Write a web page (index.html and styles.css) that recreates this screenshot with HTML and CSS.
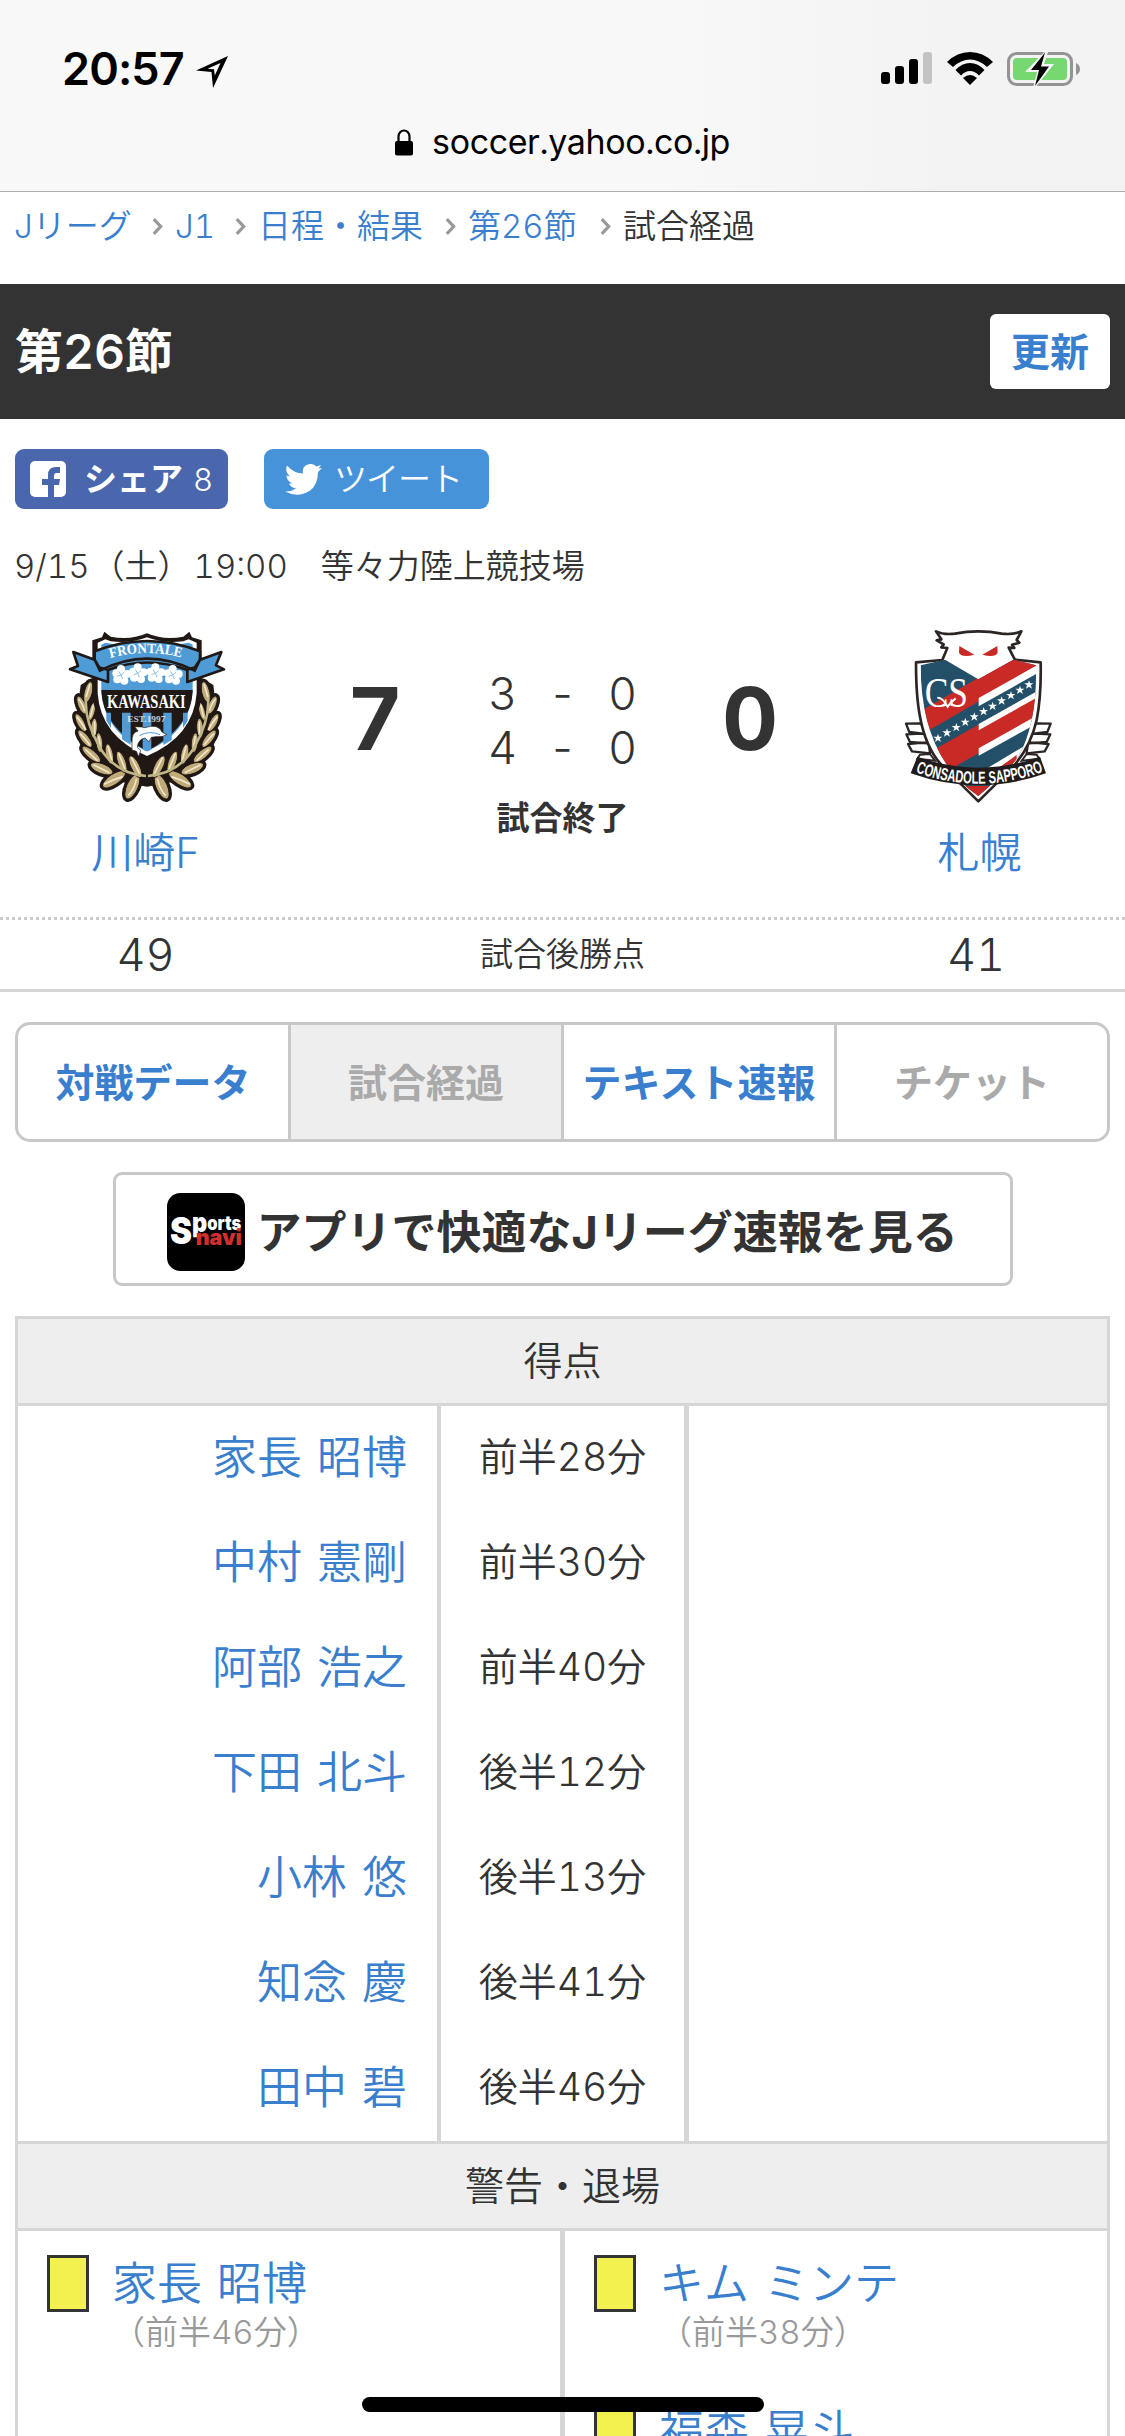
FILE: index.html
```html
<!DOCTYPE html>
<html lang="ja">
<head>
  <meta charset="UTF-8" />
  <title>第26節 川崎F vs. 札幌 試合経過</title>
  <meta name="viewport" content="width=device-width, initial-scale=1.0" />
  <link rel="stylesheet" href="styles.css">
</head>
<body>
  <div class="browser-bar">
    <div class="status">
      <div class="clock">
        <span class="time">20:57</span>
        <svg class="location" width="32" height="33" viewBox="0 0 32 33"><path fill-rule="evenodd" d="M32 0L17 32L15.500 16L0 14.500ZM24.500 7L11.500 12.700L18 13.300L18.800 19.500Z"/></svg>
      </div>
      <div class="status-icons">
        <svg width="52" height="33" viewBox="0 0 52 33">
          <rect x="0" y="20" width="9" height="12" rx="3"/>
          <rect x="14" y="14" width="9" height="18" rx="3"/>
          <rect x="28" y="7" width="9" height="25" rx="3"/>
          <rect x="42" y="0" width="9" height="32" rx="3" fill="#c3c3c3"/>
        </svg>
        <svg width="46" height="33" viewBox="0 0 46 33">
          <path d="M0 10Q10 0 23 0T46 10L40 15Q32 7.500 23 7.500T6 15Z"/>
          <path d="M8.500 18Q15 11 23 11T37.500 18L32 23.500Q28 19 23 19T14 23.500Z"/>
          <path d="M16 26Q23 20 30 26L23 33Z"/>
        </svg>
        <svg width="74" height="36" viewBox="0 0 74 36">
          <rect x="1.500" y="2.500" width="63" height="31" rx="8" fill="none" stroke="#949494" stroke-width="3"/>
          <rect x="6" y="7" width="54" height="22" rx="4" fill="#77d872"/>
          <path d="M69 12Q73 14 73 18T69 24Z" fill="#949494"/>
          <path d="M37.500 1L18 21H30L26.500 35H29.500L47 13H37L41 1Z" fill="#f4f4f4"/>
          <path d="M38 1.500L24 19H32L28 35L42 15.500H34Z"/>
        </svg>
      </div>
    </div>
    <div class="address">
      <svg width="18" height="27" viewBox="0 0 18 27"><path d="M3.500 13V7.500a5.500 6 0 0 1 11 0V13" fill="none" stroke="#000" stroke-width="2.200"/><rect y="12" width="18" height="14.500" rx="2"/></svg>
      <span>soccer.yahoo.co.jp</span>
    </div>
  </div>

  <nav class="breadcrumb">
    <a class="crumb-league">Jリーグ</a><svg class="chev" viewBox="0 0 10 16"><path d="M1.500 1L8 8L1.500 15"/></svg>
    <a class="crumb-j1">J1</a><svg class="chev" viewBox="0 0 10 16"><path d="M1.500 1L8 8L1.500 15"/></svg>
    <a class="crumb-schedule">日程・結果</a><svg class="chev" viewBox="0 0 10 16"><path d="M1.500 1L8 8L1.500 15"/></svg>
    <a class="crumb-round">第26節</a><svg class="chev" viewBox="0 0 10 16"><path d="M1.500 1L8 8L1.500 15"/></svg>
    <span>試合経過</span>
  </nav>

  <header class="round-header">
    <h1>第26節</h1>
    <button class="reload">更新</button>
  </header>

  <div class="share">
    <a class="share-btn facebook">
      <svg width="36" height="36" viewBox="0 0 36 36"><rect width="36" height="36" rx="5" fill="#fff"/><path d="M18 36V24H12V18H18V14Q18 6 26 6H30V12H26.500Q24 12 24 15V18H30L29 24H24V36Z" fill="#4a67ad"/></svg>
      <b>シェア</b><span>8</span>
    </a>
    <a class="share-btn twitter">
      <svg width="37" height="31" viewBox="0 0 37 31"><path fill="#fff" d="M2 1.500Q9 9.500 18 9.500Q17 4 20.500 1.500Q27-2 31.500 2.500L36 1L33.500 4.500L37 4L33 8Q33 21 24.500 27Q13 34 0 27.500Q6 28 11 24.500Q5.500 23.500 4 19.500H7.500Q1.500 17 1.500 11.500L5 12.500Q-.5 8 2 1.500Z"/></svg>
      <span>ツイート</span>
    </a>
  </div>

  <p class="match-date">9/15<span class="weekday">（土）</span>19:00　等々力陸上競技場</p>

  <section class="scoreboard">
    <div class="team">
      <svg class="crest crest-home" viewBox="0 0 600 630">
        <defs>
          <g id="leaves">
            <ellipse rx="12" ry="32" transform="translate(115 246) rotate(14)"/>
            <ellipse rx="11" ry="29" transform="translate(95 285) rotate(-22)"/>
            <ellipse rx="11" ry="30" transform="translate(92 338) rotate(-28)"/>
            <ellipse rx="12" ry="32" transform="translate(105 386) rotate(-38)"/>
            <ellipse rx="13" ry="35" transform="translate(124 433) rotate(-50)"/>
            <ellipse rx="15" ry="36" transform="translate(155 476) rotate(-68)"/>
            <ellipse rx="16" ry="40" transform="translate(192 508) rotate(56)"/>
            <ellipse rx="17" ry="40" transform="translate(247 530) rotate(24)"/>
            <ellipse rx="9" ry="28" transform="translate(126 304) rotate(14)"/>
            <ellipse rx="10" ry="29" transform="translate(132 354) rotate(4)"/>
            <ellipse rx="10" ry="30" transform="translate(148 398) rotate(-6)"/>
            <ellipse rx="11" ry="31" transform="translate(178 432) rotate(-12)"/>
            <ellipse rx="12" ry="34" transform="translate(215 456) rotate(-20)"/>
            <ellipse rx="13" ry="36" transform="translate(256 470) rotate(-26)"/>
          </g>
          <g id="veins">
            <path d="M120 222L108 262M85 267Q98 280 104 304M80 320Q94 336 108 360M90 370Q106 386 120 406M106 418Q126 436 142 452M130 464Q154 476 178 488M162 523Q186 510 218 500M235 557Q252 540 260 506"/>
            <path d="M130 284L121 322M134 334V374M146 378L152 416M174 408L186 454M206 430L226 480M244 442L270 494"/>
          </g>
        </defs>
        <path d="M125 205L92 225L82 310L78 370L104 440L180 510L291 530L402 510L478 440L504 370L500 310L490 225L457 205Z" fill="#201815"/>
        <g id="wreath">
          <use href="#leaves" fill="#201815" stroke="#201815" stroke-width="17"/>
          <use href="#leaves" fill="#c0ab78" stroke="#201815" stroke-width="3"/>
          <use href="#veins" fill="none" stroke="#f1e6cf" stroke-width="5"/>
          <path d="M108 262Q102 330 148 410T288 498" fill="none" stroke="#c0b684" stroke-width="8"/>
        </g>
        <use href="#wreath" transform="translate(582 0) scale(-1 1)"/>
        <path d="M163 65L182 80Q240 92 291 70Q342 92 400 80L418 65L426 82L455 91V250Q445 390 291 450Q137 390 127 250V91L156 82Z" fill="#201815"/>
        <path d="M143 98L166 88L182 94Q240 102 291 82Q342 102 400 94L416 88L440 98V250Q430 380 291 438Q152 380 143 250Z" fill="#fff"/>
        <path d="M154 104L166 98Q230 112 291 94Q352 112 416 98L428 104V250Q415 370 291 424Q167 370 154 250Z" fill="#4f9bd6"/>
        <path d="M154 240H428Q426 350 291 424Q156 350 154 240Z" fill="#201815"/>
        <path d="M169 308H183V354L169 332ZM216 308H242V404L216 388ZM278 308H304V419L291 424L278 419ZM340 308H365V390L340 405ZM399 308H413V332L399 354Z" fill="#4f9bd6"/>
        <path d="M70 126L134 149V124Q291 62 450 124V149L514 126L498 166L522 178L412 216V180Q291 135 174 180V216L60 178L84 168Z" fill="#4f9bd6" stroke="#201815" stroke-width="8" stroke-linejoin="round"/>
        <path d="M134 149L150 182Q291 110 434 182L450 149M134 149L148 173L171 178M450 149L434 173L412 178" fill="none" stroke="#201815" stroke-width="8"/>
        <path id="ribbon" d="M150 154Q291 104 432 154" fill="none"/>
        <text class="crest-serif" font-size="43"><textPath href="#ribbon" startOffset="32" textLength="216" lengthAdjust="spacingAndGlyphs">FRONTALE</textPath></text>
        <g fill="#fff">
          <g id="flower"><circle cx="213" cy="177" r="12"/><circle cx="231" cy="192" r="12"/><circle cx="223" cy="212" r="12"/><circle cx="202" cy="208" r="12"/><circle cx="199" cy="190" r="12"/><circle cx="213" cy="195" r="12"/><path d="M213 195l-7-11M213 195l10-8M213 195l5 12M213 195l-12 4" stroke="#8ec0e6" stroke-width="3"/></g>
          <use href="#flower" x="50" y="-5"/><use href="#flower" x="103" y="-5"/><use href="#flower" x="155"/>
        </g>
        <text class="crest-serif" x="171" y="293" font-size="55" textLength="236" lengthAdjust="spacingAndGlyphs">KAWASAKI</text>
        <text class="crest-serif" x="232" y="336" font-size="25" textLength="114" lengthAdjust="spacingAndGlyphs" opacity=".75">EST.1997</text>
        <path d="M246 400Q244 366 264 363L254 350Q278 350 284 353Q325 340 336 366L350 374Q340 382 318 380L304 382L297 395L285 384Q264 388 262 412L272 421L266 440L259 424L246 420Z" fill="#fff" stroke="#201815" stroke-width="2"/>
        <path d="M268 377Q298 360 330 374" fill="none" stroke="#4f9bd6" stroke-width="3"/>
      </svg>
      <a>川崎F</a>
    </div>
    <div class="total">7</div>
    <div class="halves">
      <div class="half"><span>3</span><span>-</span><span>0</span></div>
      <div class="half"><span>4</span><span>-</span><span>0</span></div>
      <div class="state">試合終了</div>
    </div>
    <div class="total">0</div>
    <div class="team">
      <svg class="crest" viewBox="0 0 600 630">
        <defs>
          <clipPath id="sshield"><path d="M122 166L195 149L295 208L400 149L468 166Q472 340 415 440Q390 476 295 558Q122 440 122 166Z"/></clipPath>
        </defs>
        <g id="feathers" fill="#fff" stroke="#2b2523" stroke-width="7" stroke-linejoin="round">
          <path d="M150 430L96 424L84 402L146 396ZM142 400L90 396L79 373L138 370ZM135 372L88 366L78 341L118 340L136 350Z"/>
        </g>
        <use href="#feathers" transform="translate(590 0) scale(-1 1)"/>
        <path d="M168 64Q190 75 225 71Q295 57 365 71Q400 75 424 64L410 90L418 98L396 104L403 114L386 113L400 140L405 149L482 157Q484 260 470 330Q450 420 385 485L295 574L205 485Q140 430 120 320Q108 260 108 157L187 150L202 114L184 112L191 103L170 91L184 88Z" fill="#fff" stroke="#2b2523" stroke-width="8" stroke-linejoin="round"/>
        <path d="M238 108L283 134Q245 144 237 128ZM352 108L307 134Q345 144 353 128Z" fill="#c92a25"/>
        <g clip-path="url(#sshield)">
          <rect x="100" y="140" width="390" height="430" fill="#235068"/>
          <path d="M100 316L430 126L490 150V162L100 388Z" fill="#c92a25"/>
          <path d="M296 264L490 155V180L296 289Z" fill="#fff"/>
          <path d="M100 454L490 235V320L100 540Z" fill="#c92a25"/>
          <path d="M296 342L490 233V252L296 361Z" fill="#fff"/>
          <path d="M296 415L490 306V330L296 437Z" fill="#fff"/>
          <path d="M296 490L490 374V400L296 512Z" fill="#fff"/>
          <path d="M340 485L410 435V570H200V528H340Z" fill="#c92a25"/>
        </g>
        <text class="crest-script" x="134" y="290" font-size="128" textLength="130" lengthAdjust="spacingAndGlyphs">CS</text>
        <path d="M172 263Q188 262 203 290Q212 276 227 265" fill="none" stroke="#fff" stroke-width="6"/>
        <g fill="#fff">
          <path id="star" d="M174 371L177 380L187 380L179 386L183 396L174 390L165 396L168 386L160 380L171 380Z"/>
          <use href="#star" x="27" y="-16"/><use href="#star" x="55" y="-32"/><use href="#star" x="82" y="-48"/><use href="#star" x="109" y="-64"/>
          <use href="#star" x="137" y="-80"/><use href="#star" x="164" y="-96"/><use href="#star" x="191" y="-112"/><use href="#star" x="219" y="-128"/><use href="#star" x="246" y="-144"/><use href="#star" x="273" y="-160"/>
        </g>
        <path d="M120 434L150 432L165 452L112 446ZM470 434L440 432L425 452L478 446Z" fill="#fff" stroke="#2b2523" stroke-width="6"/>
        <path d="M112 440Q295 506 480 440L498 490Q295 562 92 490Z" fill="#201c1b"/>
        <path id="banner" d="M104 486Q295 556 488 486" fill="none"/>
        <text class="crest-sans" font-size="52"><textPath href="#banner" startOffset="3" textLength="392" lengthAdjust="spacingAndGlyphs">CONSADOLE SAPPORO</textPath></text>
      </svg>
      <a>札幌</a>
    </div>
  </section>

  <div class="points">
    <span class="pt">49</span>
    <span>試合後勝点</span>
    <span class="pt pt-away">41</span>
  </div>

  <div class="tabs">
    <a>対戦データ</a>
    <span class="current">試合経過</span>
    <a>テキスト速報</a>
    <span>チケット</span>
  </div>

  <a class="app-banner">
    <svg width="78" height="78" viewBox="0 0 234 234">
      <rect width="234" height="234" rx="40"/>
      <text class="logo-main" x="9" y="154" textLength="214" lengthAdjust="spacingAndGlyphs"><tspan font-size="112">S</tspan><tspan font-size="80" dy="-38">p</tspan><tspan font-size="56" dy="-5">orts</tspan></text>
      <text class="logo-sub" x="86" y="156" font-size="62" textLength="139" lengthAdjust="spacingAndGlyphs">navi</text>
    </svg>
    <span>アプリで快適なJリーグ速報を見る</span>
  </a>

  <section class="detail">
    <h2>得点</h2>
    <div class="goals">
      <ul class="home">
        <li>家長 昭博</li>
        <li>中村 憲剛</li>
        <li>阿部 浩之</li>
        <li>下田 北斗</li>
        <li>小林 悠</li>
        <li>知念 慶</li>
        <li>田中 碧</li>
      </ul>
      <ul class="minute">
        <li>前半28分</li>
        <li>前半30分</li>
        <li>前半40分</li>
        <li>後半12分</li>
        <li>後半13分</li>
        <li>後半41分</li>
        <li>後半46分</li>
      </ul>
      <ul class="away"></ul>
    </div>
    <h2>警告・退場</h2>
    <div class="cards">
      <div class="side">
        <div class="card"><i></i><div><a>家長 昭博</a><small>（前半46分）</small></div></div>
      </div>
      <div class="side">
        <div class="card"><i></i><div><a>キム ミンテ</a><small>（前半38分）</small></div></div>
        <div class="card"><i></i><div><a>福森 晃斗</a></div></div>
      </div>
    </div>
  </section>

  <div class="home-indicator"></div>
</body>
</html>
```

FILE: styles.css
```css
* {
  box-sizing: border-box;
}

body {
  margin: 0;
  height: 2436px;
  overflow: hidden;
  position: relative;
  background: #fff;
  color: #333;
  font-family: "Inter", "Noto Sans CJK JP", sans-serif;
  font-size: 33px;
  font-weight: 350;
  font-variant-numeric: tabular-nums;
  line-height: 1;
}

a {
  color: #3a7fce;
}

ul, p, h1, h2 {
  margin: 0;
  padding: 0;
  list-style: none;
}

svg {
  display: block;
  flex: none;
}

/* browser chrome */
.browser-bar {
  height: 192px;
  background: linear-gradient(to right, #f8f8f8 60%, #f3f3f3 85%);
  border-bottom: 1px solid #acacac;
  color: #000;
}

.status {
  display: flex;
  justify-content: space-between;
  padding: 46px 44px 0 62px;
  height: 119px;
}

.clock {
  display: flex;
  gap: 10px;
}

.time {
  width: 124px;
  font-size: 45px;
  font-weight: 600;
  letter-spacing: -0.9px;
  line-height: 46px;
  white-space: nowrap;
  font-variant-numeric: normal;
}

.location {
  margin-top: 10px;
}

.status-icons {
  display: flex;
  gap: 14px;
  padding-top: 6px;
}

.status-icons svg:last-child {
  margin-top: -1px;
}

.address {
  display: flex;
  justify-content: center;
  align-items: center;
  gap: 19px;
  height: 46px;
  font-size: 34px;
  font-weight: 400;
  letter-spacing: -0.4px;
}

/* breadcrumb */
.breadcrumb {
  display: flex;
  align-items: center;
  height: 92px;
  padding: 0 14px 23px;
  white-space: nowrap;
}

.chev {
  width: 11px;
  height: 17px;
  margin: 0 12px 0 0;
}

.chev path {
  fill: none;
  stroke: #999;
  stroke-width: 3;
}

.crumb-league {
  width: 138px;
}

.crumb-j1 {
  width: 60px;
}

.crumb-schedule {
  width: 187px;
}

.crumb-round {
  width: 132px;
}

/* round */
.round-header {
  display: flex;
  justify-content: space-between;
  align-items: center;
  height: 135px;
  padding: 0 15px;
  background: #333;
}

.round-header h1 {
  color: #fff;
  font-size: 48px;
  font-weight: 600;
}

.reload {
  width: 120px;
  height: 75px;
  padding: 0 0 6px;
  border: 0;
  border-radius: 6px;
  background: #fff;
  color: #3a7fce;
  font: bold 39px "Noto Sans CJK JP", sans-serif;
}

.share {
  display: flex;
  gap: 36px;
  padding: 30px 15px 0;
}

.share-btn {
  display: flex;
  align-items: center;
  height: 60px;
  border-radius: 9px;
  color: #fff;
}

.share-btn b {
  margin-left: 18px;
  font-weight: 700;
}

.facebook {
  width: 213px;
  padding-left: 15px;
  background: #4a67ad;
}

.facebook span {
  margin-left: 10px;
  font-size: 31px;
}

.twitter {
  width: 225px;
  padding-left: 21px;
  background: #4693da;
}

.twitter span {
  margin-left: 12px;
  letter-spacing: -1px;
}

.match-date {
  height: 60px;
  margin: 39px 15px 0 14px;
  line-height: 36px;
}

.weekday {
  margin: 0 3px 0 2px;
}

/* scoreboard */
.scoreboard {
  display: grid;
  grid-template-columns: 291px 168px 207px 168px 291px;
  height: 309px;
}

.team {
  display: flex;
  flex-direction: column;
  align-items: center;
  font-size: 42px;
}

.crest {
  width: 200px;
  height: 210px;
  margin: 2px 0 12px;
}

.crest-home {
  margin-left: 8px;
}

.crest-serif {
  fill: #fff;
  font-family: "Liberation Serif", serif;
  font-weight: 700;
}

.crest-script {
  fill: #fff;
  font-family: "Liberation Serif", serif;
  font-weight: 400;
}

.crest-sans {
  fill: #fff;
  font-family: "Liberation Sans", sans-serif;
  font-weight: 700;
}

.total {
  padding-top: 67px;
  font-size: 87px;
  font-weight: 700;
  text-align: center;
}

.halves {
  padding-top: 59px;
}

.half {
  display: grid;
  grid-template-columns: 60px 60px 60px;
  justify-content: center;
  font-size: 45px;
  line-height: 54px;
  text-align: center;
}

.state {
  margin-top: 27px;
  font-weight: 700;
  text-align: center;
}

.points {
  display: grid;
  grid-template-columns: 291px 1fr 291px;
  align-items: center;
  height: 75px;
  border-top: 3px dotted #ccc;
  border-bottom: 3px solid #d6d6d6;
  text-align: center;
}

.points .pt {
  font-size: 45px;
}

.points .pt-away {
  padding-right: 7px;
}

/* tabs */
.tabs {
  display: grid;
  grid-template-columns: 270px 273px 273px 1fr;
  height: 120px;
  margin: 30px 15px 0;
  border: 3px solid #c8c8c8;
  border-radius: 15px;
  overflow: hidden;
  color: #aaa;
  font-size: 39px;
  font-weight: 700;
  line-height: 115px;
  text-align: center;
  white-space: nowrap;
}

.tabs > * + * {
  border-left: 3px solid #c8c8c8;
}

.tabs .current {
  background: #eee;
}

.app-banner {
  display: flex;
  align-items: center;
  gap: 12px;
  width: 900px;
  height: 114px;
  margin: 30px auto;
  padding-left: 51px;
  padding-top: 6px;
  border: 3px solid #c8c8c8;
  border-radius: 9px;
  color: #333;
  font-size: 45px;
  font-weight: 700;
  white-space: nowrap;
}

.logo-main,
.logo-sub {
  font-family: "Inter", sans-serif;
  font-weight: 900;
  fill: #fff;
}

.logo-sub {
  fill: #d02f2f;
}

/* goals and cards */
.detail {
  margin: 0 15px;
  border: 3px solid #d6d6d6;
}

.detail h2 {
  height: 87px;
  border-bottom: 3px solid #d6d6d6;
  background: #eee;
  font-size: 39px;
  font-weight: 350;
  line-height: 84px;
  text-align: center;
}

.goals {
  display: grid;
  grid-template-columns: 423px 248px 1fr;
  height: 738px;
  border-bottom: 3px solid #d6d6d6;
}

.goals li {
  height: 105px;
  line-height: 104px;
}

.home {
  padding-right: 30px;
  border-right: 4px solid #d6d6d6;
  color: #3a7fce;
  font-size: 45px;
  text-align: right;
  word-spacing: 3px;
}

.goals .minute li {
  line-height: 102px;
}

.minute {
  border-right: 5px solid #d6d6d6;
  font-size: 39px;
  text-align: center;
}

.cards {
  display: grid;
  grid-template-columns: 547px 1fr;
  height: 260px;
}

.side {
  padding: 24px 0 0 29px;
}

.side:first-child {
  border-right: 5px solid #d6d6d6;
}

.card {
  display: flex;
  gap: 23px;
  height: 148px;
}

.card i {
  width: 42px;
  height: 57px;
  border: 3px solid #333;
  background: #f3f14f;
}

.card a {
  display: block;
  font-size: 45px;
  line-height: 57px;
  word-spacing: 3px;
}

.card small {
  display: block;
  color: #999;
  font-size: 33px;
  line-height: 41px;
}

.home-indicator {
  position: absolute;
  left: 362px;
  bottom: 24px;
  width: 402px;
  height: 15px;
  border-radius: 8px;
  background: #000;
}
```
